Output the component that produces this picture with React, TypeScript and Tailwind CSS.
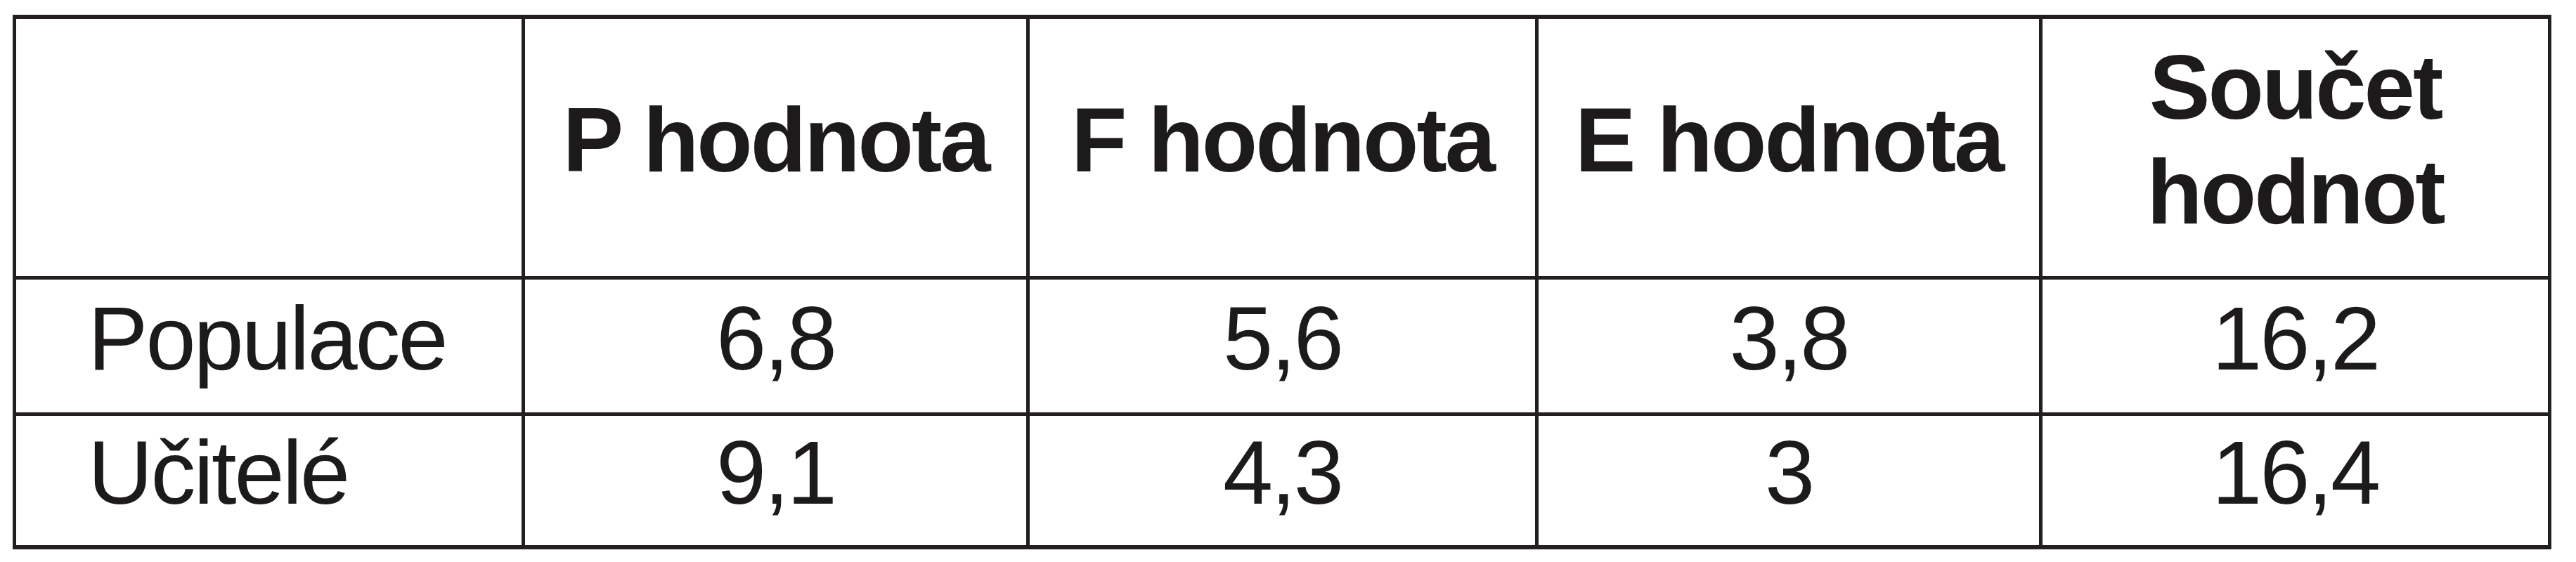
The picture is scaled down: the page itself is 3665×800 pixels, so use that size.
import { Fragment } from 'react';

const header = ['', 'P hodnota', 'F hodnota', 'E hodnota', 'Součet hodnot'];

const rows = [
  { label: 'Populace', values: ['6,8', '5,6', '3,8', '16,2'] },
  { label: 'Učitelé', values: ['9,1', '4,3', '3', '16,4'] },
];

export default function App() {
  return (
    <div
      className="w-[3665px] h-[800px] bg-white pt-[21px] pl-[18px] text-[#1c1a1b]"
      style={{ fontFamily: '"Liberation Sans", Arial, sans-serif' }}
    >
      <div className="inline-grid grid-cols-[719px_713px_719px_712px_719px] grid-rows-[366px_189px_184px] gap-[5px] bg-[#231f20] px-[5px] py-[6px]">
        {/* header */}
        {header.map((h, i) => (
          <div
            key={i}
            className="bg-white flex items-center justify-center pb-[22px] text-[130px] font-bold leading-[149px] text-center tracking-[-3px]"
          >
            {i === 4 ? (
              <span>
                Součet
                <br />
                hodnot
              </span>
            ) : (
              h
            )}
          </div>
        ))}

        {/* body rows */}
        {rows.map((r) => (
          <Fragment key={r.label}>
            <div className="bg-white flex items-center pl-[102px] pb-[22px] text-[128px] leading-none tracking-[-3px]">
              {r.label}
            </div>
            {r.values.map((v, j) => (
              <div
                key={j}
                className="bg-white flex items-center justify-center pb-[22px] text-[128px] leading-none tracking-[-3px]"
              >
                {v}
              </div>
            ))}
          </Fragment>
        ))}
      </div>
    </div>
  );
}
